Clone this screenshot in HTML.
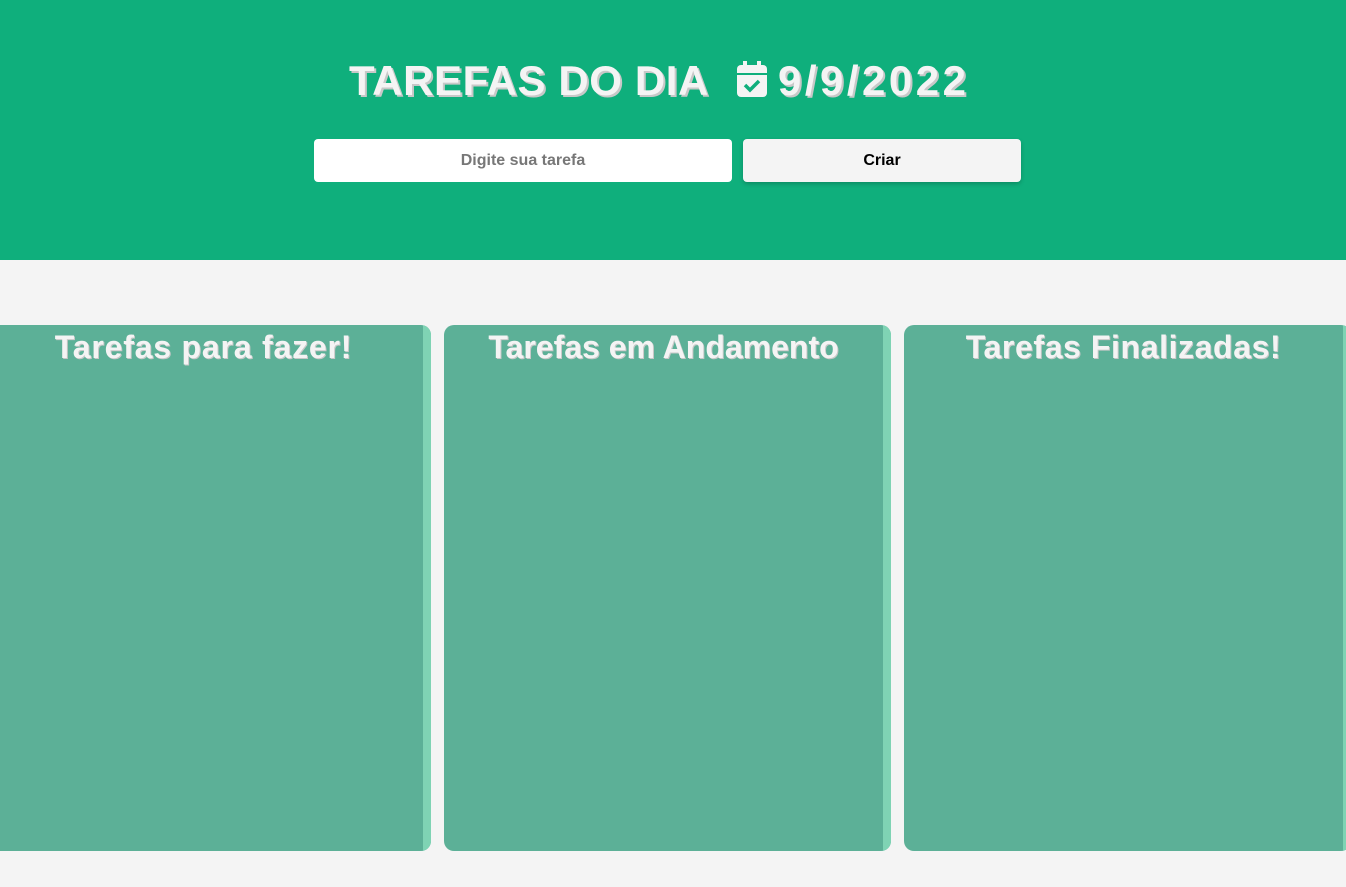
<!DOCTYPE html>
<html><head><style>
body{margin:0;width:1346px;height:887px;background:#f4f4f4;overflow:hidden;font-family:"Liberation Sans",sans-serif;position:relative}
.hd{position:absolute;left:0;top:0;width:1346px;height:260px;background:#0faf7c}
.t{position:absolute;top:57px;font-size:42px;font-weight:bold;color:#f4f4f4;text-shadow:2px 2px 0 #c8c8c8;white-space:nowrap}
.in{position:absolute;left:314px;top:139px;width:418px;height:43px;background:#fff;border-radius:4px;text-align:center;line-height:43px;color:#777;font-size:16px;font-weight:bold}
.bt{position:absolute;left:743px;top:139px;width:278px;height:43px;background:#f4f4f4;border-radius:4px;text-align:center;line-height:43px;color:#000;font-size:16px;font-weight:bold;box-shadow:0 2px 4px rgba(0,0,0,.2)}
.c{position:absolute;top:325px;height:526px;width:447px;background:#5cb097;border-radius:10px;overflow:hidden}
.c::after{content:"";position:absolute;right:0;top:0;width:8px;height:100%;background:#7fd3b4}
.c h2{margin:0;text-align:center;color:#f4f4f4;font-size:32px;font-weight:bold;padding-right:8px;line-height:44px;text-shadow:1px 1px 0 #c8c8c8;white-space:nowrap}
</style></head><body>
<div class="hd">
<div class="t" style="left:349px;letter-spacing:0.6px">TAREFAS DO DIA</div>
<svg style="position:absolute;left:736px;top:61px" width="32" height="36" viewBox="0 0 32 36"><rect x="7" y="0" width="4" height="8" fill="#f4f4f4"/><rect x="21" y="0" width="4" height="8" fill="#f4f4f4"/><rect x="1" y="4" width="30" height="32" rx="4" fill="#f4f4f4"/><rect x="1" y="12" width="30" height="2" fill="#0faf7c"/><path d="M9 24l5 5 9-9" stroke="#0faf7c" stroke-width="3.5" fill="none"/></svg>
<div class="t" style="left:778px;letter-spacing:3.5px">9/9/2022</div>
<div class="in">Digite sua tarefa</div>
<div class="bt">Criar</div>
</div>
<div class="c" style="left:-16px"><h2 style="letter-spacing:0.8px">Tarefas para fazer!</h2></div>
<div class="c" style="left:444px"><h2>Tarefas em Andamento</h2></div>
<div class="c" style="left:904px"><h2 style="letter-spacing:0.6px">Tarefas Finalizadas!</h2></div>
</body></html>
